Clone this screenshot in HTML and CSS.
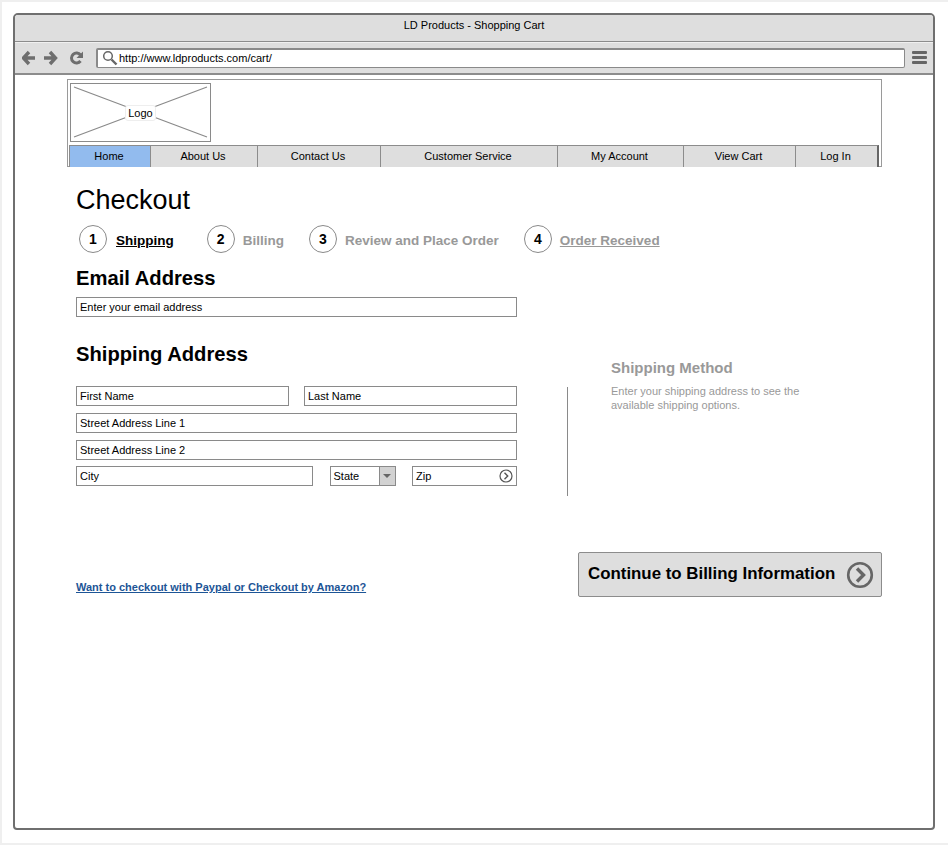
FILE: index.html
```html
<!DOCTYPE html>
<html>
	<head>
		<meta charset="utf-8" />
		<title>LD Products - Shopping Cart</title>
		<link rel="stylesheet" href="styles.css">
	</head>
	<body>
		<div class="window">
			<div class="title-bar">LD Products - Shopping Cart</div>
			<div class="tool-bar">
				<svg class="nav-icons" width="66" height="16" viewBox="0 0 66 16">
					<path d="M7 2 L1.5 8 L7 14 M2 8 H13" fill="none" stroke="#6e6e6e" stroke-width="3.4"/>
					<path d="M28 2 L33.5 8 L28 14 M33 8 H22" fill="none" stroke="#6e6e6e" stroke-width="3.4"/>
					<path d="M58.5 11 A5 5 0 1 1 58.5 5" fill="none" stroke="#6e6e6e" stroke-width="3"/>
					<path d="M61 1.5 V8 H54.5 Z" fill="#6e6e6e"/>
				</svg>
				<div class="address">
					<svg width="16" height="16" viewBox="0 0 16 16">
						<circle cx="6" cy="6" r="4.3" fill="none" stroke="#666" stroke-width="1.5"/>
						<path d="M9.5 9.5 L14.5 14.5" stroke="#666" stroke-width="2.4"/>
					</svg>
					<span>http://www.ldproducts.com/cart/</span>
				</div>
				<div class="menu-icon"><i></i><i></i><i></i></div>
			</div>
			<div class="page">
				<div class="header">
					<div class="logo">
						<svg class="logo-x" width="139" height="57" viewBox="0 0 139 57">
							<path d="M3 3 L136 53 M136 3 L3 53" stroke="#8a8a8a" stroke-width="1.2"/>
						</svg>
						<span class="logo-text">Logo</span>
					</div>
					<ul class="nav">
						<li class="active w-home">Home</li>
						<li class="w-about">About Us</li>
						<li class="w-contact">Contact Us</li>
						<li class="w-service">Customer Service</li>
						<li class="w-account">My Account</li>
						<li class="w-cart">View Cart</li>
						<li class="w-login">Log In</li>
					</ul>
				</div>

				<h1>Checkout</h1>

				<div class="steps">
					<div class="step s1"><b class="num">1</b><a class="current">Shipping</a></div>
					<div class="step s2"><b class="num">2</b><span>Billing</span></div>
					<div class="step s3"><b class="num">3</b><span>Review and Place Order</span></div>
					<div class="step"><b class="num">4</b><a>Order Received</a></div>
				</div>

				<h2 class="email-title">Email Address</h2>
				<div class="field email">Enter your email address</div>

				<div class="columns">
					<div class="address-form">
						<h2>Shipping Address</h2>
						<div class="form-row first">
							<div class="field first-name">First Name</div>
							<div class="field last-name">Last Name</div>
						</div>
						<div class="field street">Street Address Line 1</div>
						<div class="field street">Street Address Line 2</div>
						<div class="form-row city-row">
							<div class="field city">City</div>
							<div class="field state">State<span class="arrow"></span></div>
							<div class="field zip">Zip
								<svg width="14" height="14" viewBox="0 0 14 14">
									<circle cx="7" cy="7" r="6" fill="none" stroke="#555" stroke-width="1.2"/>
									<path d="M5.5 3.8 L8.7 7 L5.5 10.2" fill="none" stroke="#555" stroke-width="1.4"/>
								</svg>
							</div>
						</div>
					</div>
					<div class="divider"></div>
					<div class="method">
						<h3>Shipping Method</h3>
						<p>Enter your shipping address to see the<br>available shipping options.</p>
					</div>
				</div>

				<div class="actions">
					<a class="alt-link">Want to checkout with Paypal or Checkout by Amazon?</a>
					<div class="continue">
						<span>Continue to Billing Information</span>
						<svg width="28" height="28" viewBox="0 0 28 28">
							<circle cx="14" cy="14" r="11.8" fill="none" stroke="#666" stroke-width="2.6"/>
							<path d="M11 7.5 L17.5 14 L11 20.5" fill="none" stroke="#666" stroke-width="3.4"/>
						</svg>
					</div>
				</div>
			</div>
		</div>
	</body>
</html>
```

FILE: styles.css
```css
html,body{margin:0;padding:0}
ul,li,h1,h2,h3,p{margin:0;padding:0}
body{
	width:948px;
	height:845px;
	box-sizing:border-box;
	background:#fff;
	border-top:2px solid #efefef;
	border-left:2px solid #efefef;
	border-bottom:2px solid #efefef;
	padding:11px 13px 0 11px;
	font-family:"Liberation Sans",Arial,sans-serif;
	color:#000;
	overflow:hidden;
}
.window{
	width:922px;
	height:817px;
	box-sizing:border-box;
	border:2px solid #6f6f6f;
	border-radius:5px 5px 4px 4px;
	background:#fff;
	overflow:hidden;
}
.title-bar{
	height:26px;
	line-height:21px;
	background:#dedede;
	border-bottom:1px solid #8c8c8c;
	text-align:center;
	font-size:11px;
}
.tool-bar{
	height:29px;
	padding:0 0 1px 7px;
	background:#dedede;
	border-top:1px solid #f0f0f0;
	border-bottom:2px solid #8c8c8c;
	display:flex;
	align-items:center;
}
.nav-icons{flex:none;margin-right:8px}
.address{
	width:802px;
	height:17px;
	border-style:solid;
	border-width:2px 1px 1px 2px;
	border-color:#8a8a8a;
	background:#fff;
	display:flex;
	align-items:center;
	padding-left:4px;
	font-size:11px;
	border-radius:2px;
}
.address span{margin-left:1px}
.menu-icon{margin-left:7px;width:15px}
.menu-icon i{display:block;height:3px;background:#666;margin-bottom:2px;border-radius:1px}
.menu-icon i:last-child{margin-bottom:0}
.page{padding:4px 0 0 52px}
.header{
	width:813px;
	height:86px;
	border:1px solid #9a9a9a;
}
.logo{
	position:relative;
	width:139px;
	height:57px;
	margin:3px 0 0 2px;
	border:1px solid #8a8a8a;
	display:flex;
	align-items:center;
	justify-content:center;
}
.logo-x{position:absolute;top:0;left:0}
.logo-text{
	position:relative;
	background:#fff;
	border:1px solid #eee;
	border-radius:3px;
	padding:1px 2px;
	font-size:11px;
}
.nav{
	list-style:none;
	display:flex;
	margin:3px 0 0 1px;
	height:22px;
	width:810px;
	background:#dedede;
	border:1px solid #8c8c8c;
	border-bottom:0;
	box-sizing:border-box;
	border-right:2px solid #666;
}
.nav li{
	box-sizing:border-box;
	border-right:1px solid #8c8c8c;
	padding-right:2px;
	text-align:center;
	font-size:11px;
	line-height:21px;
}
.nav li:last-child{border-right:0}
.nav .active{background:#92bbee}
.w-home{width:81px}
.w-about{width:107px}
.w-contact{width:123px}
.w-service{width:177px}
.w-account{width:126px}
.w-cart{width:112px}
.w-login{width:81px}
h1{
	font-weight:normal;
	font-size:27px;
	line-height:32px;
	margin:17px 0 0 9px;
}
.steps{
	display:flex;
	margin:9px 0 0 12px;
	font-size:13.5px;
	font-weight:bold;
	color:#999;
}
.step{display:flex;align-items:center}
.step a,.step span{margin-top:2px}
.s1{margin-right:33px}
.s2{margin-right:25px}
.s3{margin-right:25px}
.num{
	width:26px;
	height:26px;
	border:1px solid #8a8a8a;
	border-radius:50%;
	display:flex;
	align-items:center;
	justify-content:center;
	color:#000;
	font-size:14px;
	margin-right:8px;
}
.s1 .num{margin-right:9px}
.step a{text-decoration:underline}
.step a.current{color:#000}
h2{
	font-size:20.2px;
	line-height:24px;
	font-weight:bold;
}
.email-title{margin:13px 0 0 9px}
.field{
	box-sizing:border-box;
	height:20px;
	line-height:18px;
	border:1px solid #8a8a8a;
	padding-left:3px;
	font-size:11px;
	background:#fff;
}
.email{width:441px;margin:7px 0 0 9px}
.columns{
	display:flex;
	margin:25px 0 0 9px;
}
.address-form{width:441px}
.form-row{display:flex;justify-content:space-between}
.form-row.first{margin-top:20px}
.first-name{width:213px}
.last-name{width:213px}
.street{margin-top:7px}
.city-row{margin-top:6px}
.city{width:237px}
.state{
	width:66px;
	position:relative;
}
.arrow{
	position:absolute;
	top:0;
	right:0;
	width:15px;
	height:18px;
	background:#d2d2d2;
	border-left:1px solid #8a8a8a;
}
.arrow::after{
	content:"";
	position:absolute;
	top:7px;
	left:3px;
	border:4px solid transparent;
	border-top:4px solid #666;
	border-bottom:0;
}
.zip{
	width:105px;
	display:flex;
	justify-content:space-between;
	align-items:center;
	padding-right:3px;
}
.divider{
	width:0;
	height:109px;
	border-left:1px solid #8a8a8a;
	margin:45px 0 0 50px;
}
.method{margin:16px 0 0 43px;color:#999}
.method h3{font-size:15px;line-height:20px}
.method p{font-size:11px;line-height:14px;margin-top:6px}
.actions{
	width:806px;
	margin:56px 0 0 9px;
	display:flex;
	justify-content:space-between;
	align-items:flex-end;
}
.alt-link{
	font-size:11px;
	font-weight:bold;
	color:#1d5596;
	text-decoration:underline;
	margin-bottom:4px;
}
.continue{
	box-sizing:border-box;
	width:304px;
	height:45px;
	background:#dedede;
	border:1px solid #8c8c8c;
	border-radius:2px;
	display:flex;
	align-items:center;
	justify-content:space-between;
	padding:0 7px 0 9px;
	font-size:16.87px;
	font-weight:bold;
	white-space:nowrap;
}
.continue span{margin-bottom:2px}
```
